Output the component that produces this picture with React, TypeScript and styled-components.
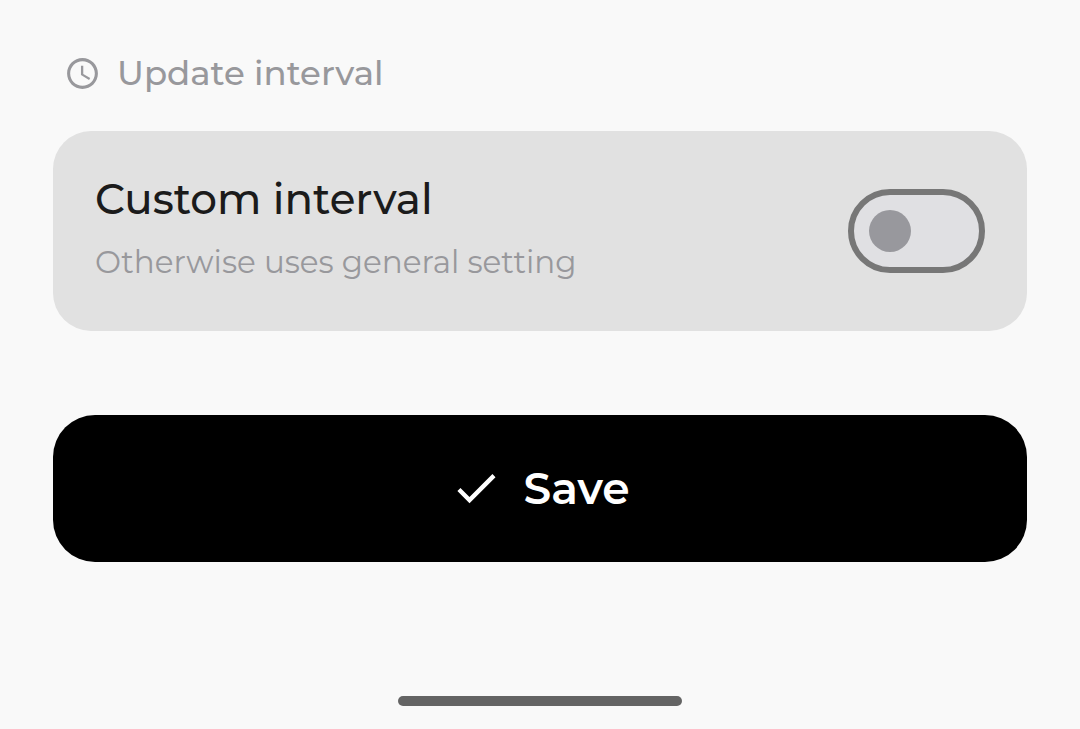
import React, { useState } from "react";
import styled, { createGlobalStyle } from "styled-components";

const GlobalStyle = createGlobalStyle`
  *, *::before, *::after { box-sizing: border-box; }
  body {
    margin: 0;
    background: #f9f9f9;
    font-family: Montserrat, Inter, sans-serif;
  }
`;

const Page = styled.main`
  display: flex;
  flex-direction: column;
  min-height: 100vh;
  padding: 49px 53px 23px;
`;

const SectionTitle = styled.h2`
  display: flex;
  align-items: center;
  gap: 16px;
  margin: 0 0 34px;
  padding-left: 11px;
  color: #98989c;
  font-size: 34px;
  font-weight: 500;
  line-height: 48px;
`;

const Icon = styled.svg<{ $size: number }>`
  flex: none;
  width: ${(p) => p.$size}px;
  height: ${(p) => p.$size}px;
  fill: currentColor;
`;

const Card = styled.section`
  display: flex;
  align-items: center;
  justify-content: space-between;
  gap: 24px;
  min-height: 200px;
  padding: 32px 42px;
  border-radius: 38px;
  background: #e1e1e1;
`;

const Texts = styled.div`
  display: flex;
  flex-direction: column;
  gap: 9px;
`;

const Label = styled.label`
  color: #1b1b1b;
  font-size: 42px;
  font-weight: 500;
  line-height: 60px;
`;

const Hint = styled.p`
  margin: 0;
  padding-bottom: 7px;
  color: #98989c;
  font-size: 31px;
  font-weight: 400;
  line-height: 48px;
`;

const Switch = styled.input`
  flex: none;
  display: flex;
  align-items: center;
  appearance: none;
  width: 137px;
  height: 84px;
  margin: 0;
  padding: 0 15px;
  border: 6px solid #777777;
  border-radius: 42px;
  background: #e0e0e3;
  cursor: pointer;

  &::before {
    content: "";
    width: 42px;
    height: 42px;
    border-radius: 50%;
    background: #98989d;
  }

  &:checked {
    justify-content: flex-end;
  }
`;

const SaveButton = styled.button`
  display: flex;
  align-items: center;
  justify-content: center;
  gap: 21px;
  min-height: 147px;
  margin-top: 84px;
  padding: 0 0 1px;
  border: 0;
  border-radius: 42px;
  background: #000000;
  color: #ffffff;
  font-family: inherit;
  font-size: 44px;
  font-weight: 600;
  line-height: 60px;
  cursor: pointer;
`;

const HomeIndicator = styled.div`
  align-self: center;
  width: 284px;
  height: 10px;
  margin-top: auto;
  border-radius: 5px;
  background: #646464;
`;

export default function App() {
  const [custom, setCustom] = useState(false);

  return (
    <>
      <GlobalStyle />
      <Page>
        <SectionTitle>
          <Icon $size={37} viewBox="0 0 24 24" aria-hidden="true">
            <path d="M11.99 2C6.47 2 2 6.48 2 12s4.47 10 9.99 10C17.52 22 22 17.52 22 12S17.52 2 11.99 2zM12 20c-4.42 0-8-3.58-8-8s3.58-8 8-8 8 3.58 8 8-3.58 8-8 8zm.5-13H11v6l5.25 3.15.75-1.23-4.5-2.67z" />
          </Icon>
          Update interval
        </SectionTitle>
        <Card>
          <Texts>
            <Label htmlFor="custom-interval">Custom interval</Label>
            <Hint id="custom-interval-hint">Otherwise uses general setting</Hint>
          </Texts>
          <Switch
            id="custom-interval"
            type="checkbox"
            role="switch"
            aria-describedby="custom-interval-hint"
            checked={custom}
            onChange={(e) => setCustom(e.target.checked)}
          />
        </Card>
        <SaveButton type="button">
          <Icon $size={52} viewBox="0 0 24 24" aria-hidden="true">
            <path d="M9 16.17L4.83 12l-1.42 1.41L9 19 21 7l-1.41-1.41z" />
          </Icon>
          Save
        </SaveButton>
        <HomeIndicator />
      </Page>
    </>
  );
}
